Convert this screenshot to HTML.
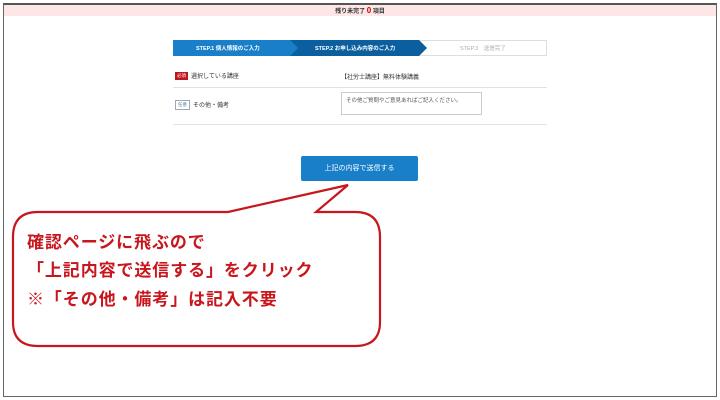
<!DOCTYPE html>
<html><head><meta charset="utf-8"><style>
*{margin:0;padding:0;box-sizing:border-box}
body{width:720px;height:400px;background:#fff;position:relative;overflow:hidden;font-family:"Liberation Sans","Noto Sans CJK JP",sans-serif}
.frame{position:absolute;left:3px;top:3px;width:714px;height:394px;border:1px solid #666;border-top:2px solid #555}
.pink{position:absolute;left:4px;top:5px;width:712px;height:11px;background:#fde6e6;font-size:6px;text-align:center;line-height:11px;color:#333;font-weight:bold}
.pink b{color:#c00;font-size:8px}
.steps{position:absolute;left:173px;top:40px;width:374px;height:16px;border:1px solid #ddd;background:#fff}
.t{position:absolute;font-size:5.5px;font-weight:bold;line-height:16px;top:0}
.lab{position:absolute;font-size:6px;color:#333}
.badge{display:inline-block;font-size:4.5px;padding:1px 2px;margin-right:3px;vertical-align:middle}
.hr{position:absolute;left:173px;width:374px;height:1px;background:#e2e2e2}
.ta{position:absolute;left:341px;top:92px;width:141px;height:23px;border:1px solid #ccc;font-size:5.5px;color:#555;padding:3px 4px}
.btn{position:absolute;left:301px;top:156px;width:117px;height:25px;background:#1a7fc9;border-radius:2px;color:#fff;font-size:7px;text-align:center;line-height:25px}
.msg{position:absolute;left:27px;font-size:17px;font-weight:bold;color:#c8161d;white-space:nowrap;letter-spacing:0.9px}
</style></head><body>
<div class="frame"></div>
<div class="pink">残り未完了 <b>0</b> 項目</div>
<div class="steps">
<svg width="374" height="16" style="position:absolute;left:-1px;top:-1px">
<polygon points="0,0 246,0 254,8 246,16 0,16" fill="#0c5f9e"/>
<polygon points="0,0 117,0 125,8 117,16 0,16" fill="#1a7fc9"/>
</svg>
<div class="t" style="left:22px;color:#fff">STEP.1 個人情報のご入力</div>
<div class="t" style="left:141px;color:#fff">STEP.2 お申し込み内容のご入力</div>
<div class="t" style="left:286px;color:#aaa;font-weight:normal">STEP.3　送信完了</div>
</div>
<div class="lab" style="left:175px;top:71px"><span class="badge" style="background:#c0151d;color:#fff">必須</span>選択している講座</div>
<div class="lab" style="left:341px;top:72px">【社労士講座】無料体験講義</div>
<div class="hr" style="top:87px"></div>
<div class="lab" style="left:175px;top:100px"><span class="badge" style="border:1px solid #9ab;color:#579">任意</span>その他・備考</div>
<div class="ta">その他ご質問やご意見あればご記入ください。</div>
<div class="hr" style="top:124px"></div>
<div class="btn">上記の内容で送信する</div>
<svg width="720" height="400" style="position:absolute;left:0;top:0">
<path d="M228,212 L348,185 L316,212 L355,212 Q380,212 380,237 L380,322 Q380,346 355,346 L38,346 Q13,346 13,322 L13,237 Q13,212 38,212 Z" fill="#fff" stroke="#c8161d" stroke-width="2.2" stroke-linejoin="miter"/>
</svg>
<div class="msg" style="top:228px">確認ページに飛ぶので</div>
<div class="msg" style="top:256px">「上記内容で送信する」をクリック</div>
<div class="msg" style="top:285px">※「その他・備考」は記入不要</div>
</body></html>
